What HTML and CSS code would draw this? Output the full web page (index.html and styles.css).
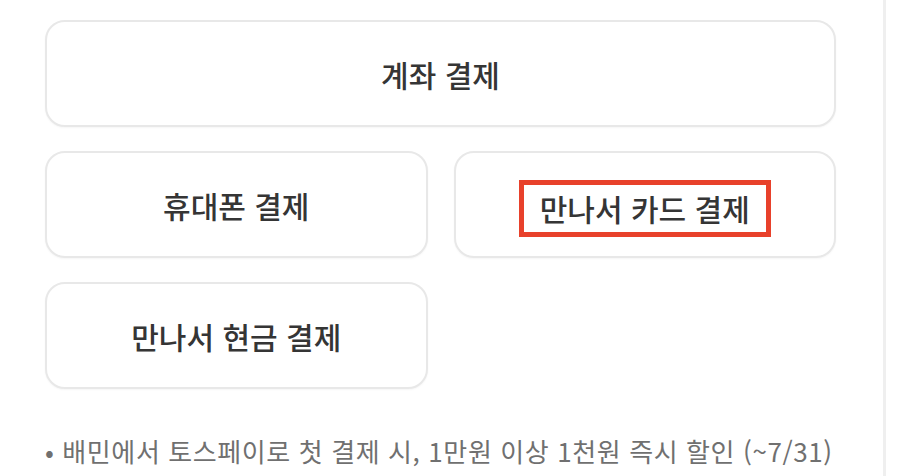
FILE: index.html
```html
<!DOCTYPE html>
<html lang="ko">
<head>
    <meta charset="UTF-8">
    <meta name="viewport" content="width=device-width, initial-scale=1.0">
    <title>결제 수단</title>
    <link rel="stylesheet" href="styles.css">
</head>
<body>

<div class="page">
    <div class="pay-grid">
        <button class="pay-option wide">계좌 결제</button>
        <button class="pay-option">휴대폰 결제</button>
        <button class="pay-option"><span class="marked">만나서 카드 결제</span></button>
        <button class="pay-option">만나서 현금 결제</button>
    </div>

    <p class="notice">• 배민에서 토스페이로 첫 결제 시, 1만원 이상 1천원 즉시 할인 (~7/31)</p>
</div>

</body>
</html>
```

FILE: styles.css
```css
/* Basic styling */
body {
    font-family: "Noto Sans CJK KR", "Noto Sans", sans-serif;
    background-color: #fff;
    margin: 0;
    padding: 0;
}

.page {
    width: 838px;
    height: 476px;
    padding: 20px 0 0 45px;
    border-right: 3px solid #efefef;
    box-sizing: content-box;
    overflow: hidden;
}

.pay-grid {
    width: 791px;
    display: grid;
    grid-template-columns: 1fr 1fr;
    column-gap: 26px;
    row-gap: 24px;
}

.pay-option {
    height: 107px;
    background-color: #fff;
    border: 2px solid #e8e8e8;
    border-radius: 20px;
    box-shadow: 0 1px 2px rgba(0, 0, 0, 0.04);
    font-family: inherit;
    font-size: 30px;
    font-weight: 500;
    color: #353535;
    line-height: 42px;
    cursor: pointer;
    padding: 0;
}

.pay-option.wide {
    grid-column: span 2;
}

.marked {
    display: inline-block;
    border: 5px solid #e8412b;
    padding: 2px 16px 3px;
    margin-top: 8px;
}

.notice {
    margin: 46px 0 0;
    font-size: 26px;
    line-height: 32px;
    color: #707070;
    letter-spacing: 0.6px;
}
```
